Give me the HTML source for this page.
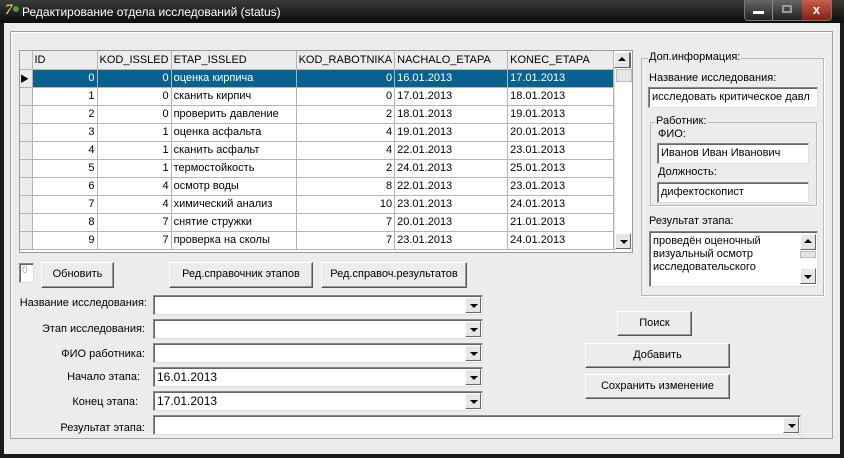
<!DOCTYPE html>
<html><head><meta charset="utf-8"><style>
*{box-sizing:border-box;margin:0;padding:0}
body{width:844px;height:458px;overflow:hidden;background:#1a1a1a;font-family:"Liberation Sans","Noto Sans CJK SC",sans-serif;font-size:11px;color:#000;position:relative}
.a{position:absolute}
.title{left:0;top:0;width:844px;height:23px;background:linear-gradient(#3a3a3a,#0c0c0c);color:#fff;font-size:12px}
.win{left:4px;top:23px;width:836px;height:431px;background:#ececec}
.panel{left:10px;top:31px;width:823px;height:408px;border:1px solid #a0a0a0;box-shadow:inset 1px 1px #fff}
.edit{background:#fff;border:1px solid #888;border-right-color:#ddd;border-bottom-color:#ddd;box-shadow:inset 1px 1px #666;padding:3px 0 0 3px;white-space:nowrap;overflow:hidden}
.btn{background:#ececec;border:1px solid #fff;border-right-color:#555;border-bottom-color:#555;box-shadow:inset -1px -1px #999;text-align:center;line-height:22px}
.dd{position:absolute;right:1px;top:1px;width:16px;height:16px;background:#e6e6e6;border:1px solid #fff;border-right-color:#666;border-bottom-color:#666}
.dd:after{content:"";position:absolute;left:4px;top:6px;border:4px solid transparent;border-top:4px solid #000;border-bottom:0}
.lbl{text-align:right;width:140px;left:5px}
table{border-collapse:collapse;font-size:11px}
td{height:18px;border-right:1px solid #b4b4b4;border-bottom:1px solid #b4b4b4;padding:0 2px;white-space:nowrap}
.grp{border:1px solid #b8b8b8;box-shadow:1px 1px #fff}
.gt{background:#ececec;padding:0 1px}
</style></head><body>
<div class="a title"><span class="a" style="left:5px;top:2px;font:bold italic 15px 'Liberation Serif';color:#d6c24a">7</span><span class="a" style="left:13px;top:6px;width:6px;height:6px;border-radius:3px;background:#4a9a3a"></span><span class="a" style="left:22px;top:5px">Редактирование отдела исследований (status)</span>
<div class="a" style="left:744px;top:0;width:88px;height:21px;border:1px solid #777;border-top:0;border-radius:0 0 4px 4px;background:linear-gradient(#666,#222)"></div>
<div class="a" style="left:745px;top:0;width:28px;height:20px;border-right:1px solid #888"><div class="a" style="left:8px;top:11px;width:11px;height:3px;background:#fff"></div></div>
<div class="a" style="left:774px;top:0;width:27px;height:20px"><div class="a" style="left:8px;top:5px;width:10px;height:8px;border:2px solid #999"></div></div>
<div class="a" style="left:802px;top:0;width:29px;height:20px;background:linear-gradient(#c8604c,#8a1e10);border-radius:0 0 3px 0;color:#fff;font-weight:bold;font-size:13px;text-align:center;line-height:19px">x</div>
</div>
<div class="a win"></div>
<div class="a panel"></div>
<div class="a" style="left:19px;top:50px;width:614px;height:203px;background:#fff;border:1px solid #999;overflow:hidden">
<table style="width:594px">
<tr style="background:#ececec"><td style="width:12px"></td><td style="width:65px">ID</td><td style="width:71px">KOD_ISSLED</td><td style="width:125px">ETAP_ISSLED</td><td style="width:96px">KOD_RABOTNIKA</td><td style="width:113px">NACHALO_ETAPA</td><td>KONEC_ETAPA</td></tr>
<tr style="background:#07628f;color:#fff"><td style="background:#ececec;color:#000;font-size:9px;padding:0">&#9654;</td><td align="right">0</td><td align="right">0</td><td>оценка кирпича</td><td align="right">0</td><td>16.01.2013</td><td>17.01.2013</td></tr>
<tr><td style="background:#ececec"></td><td align="right">1</td><td align="right">0</td><td>сканить кирпич</td><td align="right">0</td><td>17.01.2013</td><td>18.01.2013</td></tr>
<tr><td style="background:#ececec"></td><td align="right">2</td><td align="right">0</td><td>проверить давление</td><td align="right">2</td><td>18.01.2013</td><td>19.01.2013</td></tr>
<tr><td style="background:#ececec"></td><td align="right">3</td><td align="right">1</td><td>оценка асфальта</td><td align="right">4</td><td>19.01.2013</td><td>20.01.2013</td></tr>
<tr><td style="background:#ececec"></td><td align="right">4</td><td align="right">1</td><td>сканить асфальт</td><td align="right">4</td><td>22.01.2013</td><td>23.01.2013</td></tr>
<tr><td style="background:#ececec"></td><td align="right">5</td><td align="right">1</td><td>термостойкость</td><td align="right">2</td><td>24.01.2013</td><td>25.01.2013</td></tr>
<tr><td style="background:#ececec"></td><td align="right">6</td><td align="right">4</td><td>осмотр воды</td><td align="right">8</td><td>22.01.2013</td><td>23.01.2013</td></tr>
<tr><td style="background:#ececec"></td><td align="right">7</td><td align="right">4</td><td>химический анализ</td><td align="right">10</td><td>23.01.2013</td><td>24.01.2013</td></tr>
<tr><td style="background:#ececec"></td><td align="right">8</td><td align="right">7</td><td>снятие стружки</td><td align="right">7</td><td>20.01.2013</td><td>21.01.2013</td></tr>
<tr><td style="background:#ececec"></td><td align="right">9</td><td align="right">7</td><td>проверка на сколы</td><td align="right">7</td><td>23.01.2013</td><td>24.01.2013</td></tr>
</table>
<div class="a" style="left:594px;top:0;width:18px;height:201px;background:#fff;border-left:1px solid #ddd">
<div class="dd" style="top:1px"></div><div class="a" style="left:1px;top:18px;width:16px;height:13px;background:#e6e6e6;border:1px solid #bbb"></div><div class="dd" style="top:182px"></div>
</div>
</div>
<div class="a" style="left:614px;top:52px;width:16px;height:16px;background:#e6e6e6;border:1px solid #fff;border-right-color:#666;border-bottom-color:#666"><div class="a" style="left:3px;top:4px;border:4px solid transparent;border-bottom:4px solid #000;border-top:0"></div></div>

<div class="a grp" style="left:641px;top:58px;width:183px;height:238px"></div>
<div class="a gt" style="left:648px;top:51px">Доп.информация:</div>
<div class="a" style="left:649px;top:72px">Название исследования:</div>
<div class="a edit" style="left:648px;top:87px;width:170px;height:21px">исследовать критическое давл</div>
<div class="a grp" style="left:650px;top:122px;width:167px;height:84px"></div>
<div class="a gt" style="left:655px;top:115px">Работник:</div>
<div class="a" style="left:658px;top:128px">ФИО:</div>
<div class="a edit" style="left:657px;top:143px;width:152px;height:21px">Иванов Иван Иванович</div>
<div class="a" style="left:658px;top:166px">Должность:</div>
<div class="a edit" style="left:657px;top:182px;width:152px;height:21px">дифектоскопист</div>
<div class="a" style="left:649px;top:215px">Результат этапа:</div>
<div class="a edit" style="left:649px;top:231px;width:169px;height:56px;white-space:normal;line-height:13px">проведён оценочный визуальный осмотр исследовательского</div>
<div class="a" style="left:800px;top:234px;width:16px;height:16px;background:#e6e6e6;border:1px solid #fff;border-right-color:#666;border-bottom-color:#666"><div class="a" style="left:3px;top:4px;border:4px solid transparent;border-bottom:4px solid #000;border-top:0"></div></div>
<div class="a" style="left:800px;top:251px;width:16px;height:7px;background:#e6e6e6;border:1px solid #bbb"></div>
<div class="a" style="left:800px;top:268px;width:16px;height:16px;background:#e6e6e6;border:1px solid #fff;border-right-color:#666;border-bottom-color:#666"><div class="a" style="left:3px;top:6px;border:4px solid transparent;border-top:4px solid #000;border-bottom:0"></div></div>

<div class="a edit" style="left:19px;top:263px;width:15px;height:20px;color:#aaa;font-size:10px;padding:1px 0 0 2px">0</div>
<div class="a btn" style="left:41px;top:262px;width:73px;height:26px">Обновить</div>
<div class="a btn" style="left:169px;top:262px;width:144px;height:26px">Ред.справочник этапов</div>
<div class="a btn" style="left:321px;top:262px;width:146px;height:26px">Ред.справоч.результатов</div>

<div class="a lbl" style="top:297px;left:3px;width:144px">Название исследования:</div>
<div class="a lbl" style="top:323px">Этап исследования:</div>
<div class="a lbl" style="top:348px">ФИО работника:</div>
<div class="a lbl" style="top:371px;left:0">Начало этапа:</div>
<div class="a lbl" style="top:396px;left:-2px">Конец этапа:</div>
<div class="a lbl" style="top:422px">Результат этапа:</div>
<div class="a edit" style="left:153px;top:295px;width:330px;height:20px"><div class="dd"></div></div>
<div class="a edit" style="left:153px;top:319px;width:330px;height:20px"><div class="dd"></div></div>
<div class="a edit" style="left:153px;top:343px;width:330px;height:20px"><div class="dd"></div></div>
<div class="a edit" style="left:153px;top:367px;width:330px;height:20px;font-size:12px;padding-top:2px">16.01.2013<div class="dd"></div></div>
<div class="a edit" style="left:153px;top:391px;width:330px;height:20px;font-size:12px;padding-top:2px">17.01.2013<div class="dd"></div></div>
<div class="a edit" style="left:153px;top:415px;width:648px;height:20px"><div class="dd"></div></div>

<div class="a btn" style="left:617px;top:311px;width:75px;height:25px">Поиск</div>
<div class="a btn" style="left:585px;top:343px;width:145px;height:25px">Добавить</div>
<div class="a btn" style="left:585px;top:374px;width:145px;height:25px">Сохранить изменение</div>
</body></html>
